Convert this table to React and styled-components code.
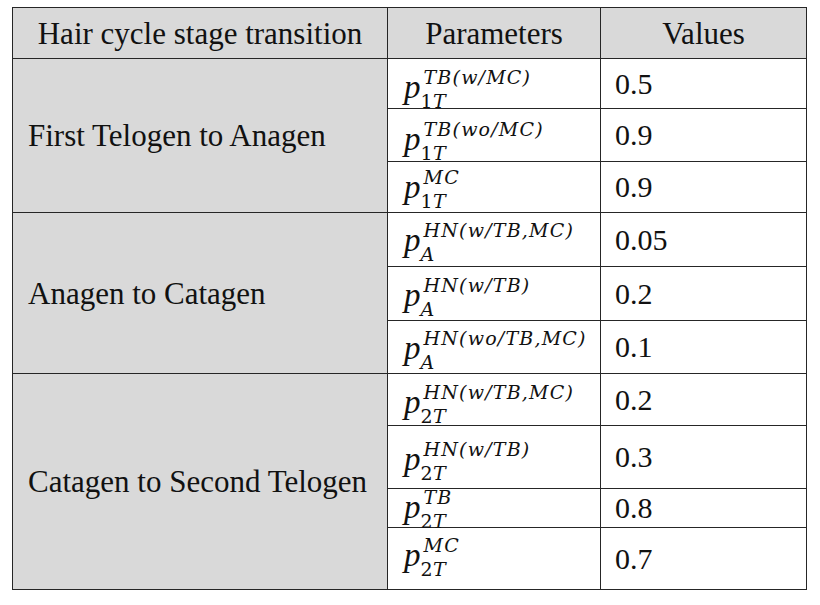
import React from "react";
import styled, { createGlobalStyle } from "styled-components";

const Global = createGlobalStyle`
  html, body { margin: 0; padding: 0; background: #ffffff; }
  body { font-family: "Liberation Serif", "Times New Roman", serif; color: #111; }
`;

const Page = styled.div`
  padding: 7px 0 0 12px;
  width: 820px;
  height: 605px;
  box-sizing: border-box;
`;

const Table = styled.div`
  display: grid;
  grid-template-columns: 374px 212px 205px;
  grid-template-rows: 50px 49px 52px 50px 53px 53px 52px 51px 62px 38px 61px;
  gap: 1px;
  padding: 1px;
  width: 795px;
  box-sizing: border-box;
  background: #262626;
`;

const HeadCell = styled.div`
  background: #d9d9d9;
  display: flex;
  align-items: center;
  justify-content: center;
  font-size: 31px;
  line-height: 1;
`;

const StageCell = styled.div`
  grid-row: span ${(p) => p.$span};
  background: #d9d9d9;
  display: flex;
  align-items: center;
  padding-left: 15px;
  font-size: 31px;
  line-height: 1;
`;

const ParamCell = styled.div`
  background: #ffffff;
  padding-left: 16px;
  overflow: visible;
`;

const ValueCell = styled.div`
  background: #ffffff;
  display: flex;
  align-items: center;
  padding-left: 14px;
  font-size: 30px;
  line-height: 1;
`;

const MathExpr = styled.div`
  display: flex;
  align-items: flex-end;
  margin-top: ${(p) => p.$top}px;
  font-style: italic;
  color: #111;
`;

const Base = styled.span`
  font-family: "Liberation Serif", serif;
  font-size: 33px;
  line-height: 33px;
`;

const Scripts = styled.span`
  display: flex;
  flex-direction: column;
  margin-bottom: -7.5px;
  margin-left: 3px;
  font-family: "DejaVu Serif", serif;
  font-size: 19px;
  line-height: 19px;
`;

const Sup = styled.span`
  letter-spacing: 1.2px;
  white-space: nowrap;
`;

const Sub = styled.span`
  margin-top: 5px;
  margin-left: -3px;
  letter-spacing: 0.3px;
  white-space: nowrap;
`;

const Digit = styled.span`
  font-style: normal;
`;

const renderSub = (s) =>
  s.split("").map((ch, i) =>
    /[0-9]/.test(ch) ? <Digit key={i}>{ch}</Digit> : <React.Fragment key={i}>{ch}</React.Fragment>
  );

const groups = [
  {
    stage: "First Telogen to Anagen",
    rows: [
      { sup: "TB(w/MC)", sub: "1T", value: "0.5", top: 9 },
      { sup: "TB(wo/MC)", sub: "1T", value: "0.9", top: 11 },
      { sup: "MC", sub: "1T", value: "0.9", top: 6 },
    ],
  },
  {
    stage: "Anagen to Catagen",
    rows: [
      { sup: "HN(w/TB,MC)", sub: "A", value: "0.05", top: 8 },
      { sup: "HN(w/TB)", sub: "A", value: "0.2", top: 9 },
      { sup: "HN(wo/TB,MC)", sub: "A", value: "0.1", top: 8 },
    ],
  },
  {
    stage: "Catagen to Second Telogen",
    rows: [
      { sup: "HN(w/TB,MC)", sub: "2T", value: "0.2", top: 9 },
      { sup: "HN(w/TB)", sub: "2T", value: "0.3", top: 14 },
      { sup: "TB", sub: "2T", value: "0.8", top: -1 },
      { sup: "MC", sub: "2T", value: "0.7", top: 8 },
    ],
  },
];

export default function App() {
  return (
    <>
      <Global />
      <Page>
        <Table>
          <HeadCell>Hair cycle stage transition</HeadCell>
          <HeadCell>Parameters</HeadCell>
          <HeadCell>Values</HeadCell>
          {groups.map((g) => (
            <React.Fragment key={g.stage}>
              <StageCell $span={g.rows.length}>{g.stage}</StageCell>
              {g.rows.map((r, i) => (
                <React.Fragment key={i}>
                  <ParamCell>
                    <MathExpr $top={r.top}>
                      <Base>p</Base>
                      <Scripts>
                        <Sup>{r.sup}</Sup>
                        <Sub>{renderSub(r.sub)}</Sub>
                      </Scripts>
                    </MathExpr>
                  </ParamCell>
                  <ValueCell>{r.value}</ValueCell>
                </React.Fragment>
              ))}
            </React.Fragment>
          ))}
        </Table>
      </Page>
    </>
  );
}
